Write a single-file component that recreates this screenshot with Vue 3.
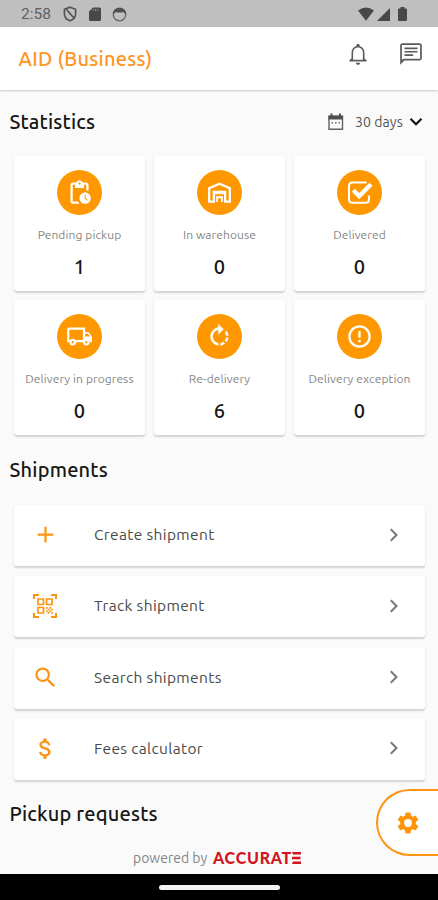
<script setup>
const stats = [
  { label: 'Pending pickup', value: 1, icon: 'pending' },
  { label: 'In warehouse', value: 0, icon: 'warehouse' },
  { label: 'Delivered', value: 0, icon: 'check' },
  { label: 'Delivery in progress', value: 0, icon: 'truck' },
  { label: 'Re-delivery', value: 6, icon: 'rotate' },
  { label: 'Delivery exception', value: 0, icon: 'alert' },
]
const actions = [
  { label: 'Create shipment', icon: 'plus' },
  { label: 'Track shipment', icon: 'qr' },
  { label: 'Search shipments', icon: 'search' },
  { label: 'Fees calculator', icon: 'dollar' },
]
</script>

<template>
  <div class="screen">
    <div class="status">
      <span class="time">2:58</span>
      <svg class="s-shield" width="14" height="16" viewBox="0 0 14 16" fill="none" stroke="#505050" stroke-width="1.6"><path d="M7 1.200 12.600 3.200V8c0 3-2.400 5.600-5.600 6.800C3.800 13.600 1.400 11 1.400 8V3.200zM3.500 3.500l7 8" /></svg>
      <svg class="s-sd" width="12" height="14" viewBox="0 0 12 14" fill="#484848"><path d="M4 .5h6.500Q12 .5 12 2v10.500Q12 14 10.500 14h-9Q0 14 0 12.500v-8z" /><path d="M4.300 2v2M6.500 2v2M8.700 2v2" stroke="#8a8a8a" /></svg>
      <svg class="s-face" width="15" height="15" viewBox="0 0 15 15"><circle cx="7.500" cy="7.500" r="6.300" fill="none" stroke="#606060" stroke-width="1.200" /><path d="M1.200 7C1.500 3 4 1 7.500 1s6 2 6.300 6c-1.300-.2-1.900-1-2.300-2-2.500.8-5.500.8-8 0-.4 1-1 1.800-2.300 2z" fill="#505050" /></svg>
      <span class="spacer"></span>
      <svg class="s-wifi" width="16" height="14" viewBox="0 0 16 14"><path d="M0 3.500Q8-2.500 16 3.500L8 13.700z" fill="#484848" /></svg>
      <svg class="s-signal" width="13" height="13" viewBox="0 0 13 13"><path d="M13 0v13H0z" fill="#484848" /></svg>
      <svg class="s-battery" width="9" height="14" viewBox="0 0 9 14"><path d="M2.500 1.500V0h4v1.500H8q1 0 1 1V13q0 1-1 1H1q-1 0-1-1V2.500q0-1 1-1z" fill="#484848" /></svg>
    </div>

    <header class="appbar">
      <h1 class="title">AID (Business)</h1>
      <svg class="bell" width="26" height="26" viewBox="0 0 24 24" fill="#5c5c5c"><path d="M12 22c1.100 0 2-.9 2-2h-4c0 1.100.9 2 2 2zm6-6v-5c0-3.070-1.630-5.640-4.500-6.320V4c0-.83-.67-1.500-1.500-1.500s-1.500.67-1.500 1.500v.68C7.640 5.360 6 7.920 6 11v5l-2 2v1h16v-1l-2-2zm-1.500 1.200h-9V11c0-2.700 1.640-5 4.500-5s4.500 2.300 4.500 5z" /></svg>
      <svg class="chat" width="26" height="26" viewBox="0 0 24 24" fill="#5c5c5c"><path d="M4 2h16c1.100 0 2 .9 2 2v12c0 1.100-.9 2-2 2H6l-4 4V4c0-1.100.9-2 2-2zm-.4 15.200 1.800-.8h15V3.600H3.600zM6 12.300h8v1.500H6zm0-3.100h12v1.500H6zM6 6.100h12v1.500H6z" /></svg>
    </header>

    <main class="content">
      <div class="section-head">
        <h2 class="heading">Statistics</h2>
        <div class="period">
          <svg width="18" height="18" viewBox="0 0 18 18"><path d="M2 3.500h13.500v12.800H2z" fill="none" stroke="#606060" stroke-width="1.400" /><path d="M1.500 2.500h14.500v4H1.500zM3.500.5h2v3h-2zM12 .5h2v3h-2z" fill="#505050" /><path d="M4.500 9H6v1.500H4.500zM8 9h1.500v1.500H8zM11.500 9H13v1.500h-1.500z" fill="#707070" /></svg>
          <span class="days">30 days</span>
          <svg class="caret" width="14" height="10" viewBox="0 0 14 10"><path d="m1.500 1.800 5.500 5.500 5.500-5.500" fill="none" stroke="#111" stroke-width="2.100" /></svg>
        </div>
      </div>

      <div class="stats">
        <div v-for="s in stats" :key="s.label" class="card stat">
          <div class="disc">
            <svg v-if="s.icon === 'pending'" width="27" height="27" viewBox="0 0 24 24" fill="#fff"><path d="M17 12c-2.760 0-5 2.240-5 5s2.240 5 5 5 5-2.240 5-5-2.240-5-5-5zm1.650 7.350L16.500 17.200V14h1v2.790l1.850 1.850-.7.710zM18 3h-3.180C14.400 1.840 13.300 1 12 1s-2.400.84-2.820 2H6c-1.100 0-2 .9-2 2v15c0 1.100.9 2 2 2h6.110c-.59-.57-1.070-1.250-1.420-2H6V5h2v3h8V5h2v5.080c.71.1 1.380.31 2 .6V5c0-1.100-.9-2-2-2zm-6 2c-.55 0-1-.45-1-1s.45-1 1-1 1 .45 1 1-.45 1-1 1z" /></svg>
            <svg v-else-if="s.icon === 'warehouse'" width="27" height="27" viewBox="0 0 24 24" fill="none" stroke="#fff"><path d="M2.800 20V8.300L12 4.200l9.200 4.100V20H17v-8.500H7V20z" stroke-width="2" /><path d="M7 13h10" stroke-width="1" /><path d="M9.800 20.500v-4.300h4.400v4.300" stroke-width="1.600" /></svg>
            <svg v-else-if="s.icon === 'check'" width="26" height="26" viewBox="0 0 26 26" fill="none" stroke="#fff"><path d="M19.500 2.500H5.500Q2 2.500 2 6v13.300q0 3.500 3.500 3.500h13q3.500 0 3.500-3.500V15.500" stroke-width="2" /><path d="m6.300 10.300 5.800 5.800L24 4.200" stroke-width="4.300" /></svg>
            <svg v-else-if="s.icon === 'truck'" width="27" height="27" viewBox="0 0 24 24" fill="#fff"><path d="M20 8h-3V4H3c-1.100 0-2 .9-2 2v11h2c0 1.660 1.340 3 3 3s3-1.340 3-3h6c0 1.660 1.340 3 3 3s3-1.340 3-3h2v-5l-3-4zm-.5 1.500 1.960 2.500H17V9.500h2.500zM6 18c-.55 0-1-.45-1-1s.45-1 1-1 1 .45 1 1-.45 1-1 1zm2.220-3c-.55-.61-1.330-1-2.220-1s-1.670.39-2.220 1H3V6h12v9H8.220zM18 18c-.55 0-1-.45-1-1s.45-1 1-1 1 .45 1 1-.45 1-1 1z" /></svg>
            <svg v-else-if="s.icon === 'rotate'" width="27" height="27" viewBox="0 0 24 24" fill="#fff" stroke="#fff" stroke-width="0.300"><path d="M15.550 5.550 11 1v3.070C7.060 4.560 4 7.920 4 12s3.050 7.440 7 7.930v-2.020c-2.840-.48-5-2.940-5-5.910s2.160-5.430 5-5.910V10l4.550-4.450zM19.930 11c-.17-1.390-.72-2.730-1.620-3.890l-1.420 1.420c.54.75.88 1.600 1.020 2.470h2.020zM13 17.900v2.020c1.390-.17 2.740-.71 3.900-1.610l-1.440-1.440c-.75.54-1.590.89-2.460 1.030zm3.890-2.420 1.420 1.410c.9-1.160 1.450-2.500 1.620-3.890h-2.020c-.14.870-.48 1.720-1.020 2.480z" /></svg>
            <svg v-else width="27" height="27" viewBox="0 0 24 24" fill="#fff"><path d="M11 15h2v2h-2zm0-8h2v6h-2zm1-5C6.470 2 2 6.500 2 12a10 10 0 1 0 10-10zm0 18a8 8 0 1 1 0-16 8 8 0 0 1 0 16z" /></svg>
          </div>
          <span class="stat-label">{{ s.label }}</span>
          <strong class="stat-value">{{ s.value }}</strong>
        </div>
      </div>

      <h2 class="heading h-ship">Shipments</h2>
      <div class="list">
        <div v-for="a in actions" :key="a.label" class="card row">
          <div class="row-icon">
            <svg v-if="a.icon === 'plus'" width="27" height="27" viewBox="0 0 24 24" fill="#ff9414"><path d="M19 13h-6v6h-2v-6H5v-2h6V5h2v6h6z" /></svg>
            <svg v-else-if="a.icon === 'qr'" width="24" height="24" viewBox="0 0 24 24" fill="none" stroke="#ff9414" stroke-width="1.700"><path d="M1 5V1h5M18 1h5v4M1 19v4h5M18 23h5v-4" stroke-width="2" /><path d="M5 5h5.500v5.500H5zM13.500 5H19v5.500h-5.500zM5 13.500h5.500V19H5z" /><path d="M13 13h1.700v1.700H13zM16.400 13h1.700v1.700h-1.700zM14.700 14.700h1.700v1.700h-1.700zM18.100 14.700h1.700v1.700h-1.700zM13 16.400h1.700v1.700H13zM16.400 16.400h1.700v1.700h-1.700zM14.700 18.100h1.700v1.700h-1.700zM18.100 18.100h1.700v1.700h-1.700z" fill="#ff9414" stroke="none" /></svg>
            <svg v-else-if="a.icon === 'search'" width="27" height="27" viewBox="0 0 24 24" fill="#ff9414"><path d="M15.500 14h-.79l-.28-.27A6.471 6.471 0 0 0 16 9.500 6.500 6.500 0 1 0 9.500 16c1.610 0 3.090-.59 4.230-1.570l.27.28v.79l5 4.990L20.490 19l-4.990-5zm-6 0C7.010 14 5 11.990 5 9.500S7.010 5 9.500 5 14 7.010 14 9.500 11.990 14 9.500 14z" /></svg>
            <svg v-else width="27" height="27" viewBox="0 0 24 24" fill="#ff9414"><path d="M11.800 10.900c-2.270-.59-3-1.200-3-2.150 0-1.090 1.010-1.850 2.700-1.850 1.780 0 2.440.85 2.500 2.100h2.210c-.07-1.720-1.120-3.300-3.210-3.810V3h-3v2.160c-1.940.42-3.500 1.680-3.500 3.610 0 2.310 1.910 3.460 4.700 4.130 2.500.6 3 1.480 3 2.410 0 .69-.49 1.790-2.700 1.790-2.060 0-2.870-.92-2.980-2.100h-2.200c.12 2.190 1.760 3.420 3.680 3.830V21h3v-2.150c1.950-.37 3.500-1.500 3.500-3.550 0-2.840-2.430-3.810-4.700-4.400z" /></svg>
          </div>
          <span class="row-label">{{ a.label }}</span>
          <svg class="chev" width="10" height="14" viewBox="0 0 10 14"><path d="m1.800 1.300 5.700 5.700-5.700 5.700" fill="none" stroke="#777" stroke-width="2" /></svg>
        </div>
      </div>

      <h2 class="heading h-pick">Pickup requests</h2>
    </main>

    <footer class="powered">
      <span class="by">powered by</span>
      <span class="brand">ACCURAT</span>
      <svg class="brand-e" width="9" height="12" viewBox="0 0 9 12" fill="#d4141c"><path d="M0 0h9v2.400H1zM0 4.800h8.500v2.400H0zM1 9.600h8V12H0z" /></svg>
    </footer>

    <div class="nav"><span class="pill"></span></div>

    <button class="fab">
      <svg width="26" height="26" viewBox="0 0 24 24" fill="#ff9408"><path d="M19.140 12.940c.04-.3.060-.61.060-.94 0-.32-.02-.64-.07-.94l2.030-1.580a.49.490 0 0 0 .12-.61l-1.920-3.320a.488.488 0 0 0-.59-.22l-2.390.96c-.5-.38-1.030-.7-1.620-.94l-.36-2.540a.484.484 0 0 0-.48-.41h-3.840c-.24 0-.43.17-.47.41l-.36 2.540c-.59.24-1.130.57-1.620.94l-2.390-.96c-.22-.08-.47 0-.59.22L2.740 8.870c-.12.21-.08.47.12.61l2.030 1.580c-.05.3-.09.63-.09.940s.02.64.07.94l-2.030 1.580a.49.490 0 0 0-.12.61l1.920 3.320c.12.22.37.29.59.22l2.390-.96c.5.38 1.030.7 1.620.94l.36 2.540c.05.24.24.41.48.41h3.840c.24 0 .44-.17.47-.41l.36-2.540c.59-.24 1.130-.56 1.620-.94l2.390.96c.22.08.47 0 .59-.22l1.920-3.320c.12-.22.07-.47-.12-.61zM12 15.600a3.600 3.600 0 1 1 0-7.200 3.600 3.600 0 0 1 0 7.200z" /></svg>
    </button>
  </div>
</template>

<style>
body { background: #fafafa; }
</style>

<style scoped>
* { box-sizing: border-box; }
.screen {
  position: relative;
  width: 438px;
  height: 900px;
  overflow: hidden;
  display: flex;
  flex-direction: column;
  background: #fafafa;
  font-family: Ubuntu, "Noto Sans", sans-serif;
  white-space: nowrap;
}
svg { display: block; flex: none; }
.status {
  height: 27px;
  flex: none;
  display: flex;
  align-items: center;
  padding: 1px 31px 0 21px;
  background: #bfbfbf;
}
.time { width: 42px; font: 15.500px/20px Roboto, sans-serif; color: #606060; }
.s-sd { margin-left: 12px; }
.s-face { margin-left: 11px; }
.spacer { flex: 1; }
.s-signal { margin-left: 3px; }
.s-battery { margin-left: 8px; }
.appbar {
  height: 63px;
  flex: none;
  display: flex;
  align-items: flex-start;
  padding: 0 14px 0 18.500px;
  background: #fff;
  box-shadow: 0 1px 2px rgba(0, 0, 0, 0.2);
}
.title { margin: 18px auto 0 0; font-size: 20px; line-height: 28px; font-weight: 500; letter-spacing: 0.250px; color: #ff941f; }
.bell { margin-top: 14px; }
.chat { margin: 14px 0 0 27px; }
.content { flex: 1; min-height: 0; padding: 0 13px 0 14px; }
.section-head { display: flex; align-items: center; height: 63px; margin-left: -4.500px; }
.heading { margin: 0; font-size: 20px; line-height: 28px; font-weight: 500; letter-spacing: 0.2px; color: #161616; }
.period { display: flex; align-items: center; margin-left: auto; padding-right: 2px; }
.days { width: 48px; margin-left: 10px; font-size: 14px; line-height: 20px; letter-spacing: 0.1px; color: #555; }
.caret { margin-left: 6px; }
.card { background: #fff; border-radius: 3px; box-shadow: 0 1.500px 2px rgba(0, 0, 0, 0.16); }
.stats { display: grid; grid-template-columns: repeat(3, 131px); gap: 9px; padding-top: 3px; }
.stat { height: 135px; display: flex; flex-direction: column; align-items: center; padding-top: 14px; }
.disc {
  width: 45px;
  height: 45px;
  border-radius: 50%;
  background: #ff9800;
  display: flex;
  align-items: center;
  justify-content: center;
}
.stat-label { margin-top: 12px; font-size: 12px; line-height: 16px; letter-spacing: 0.1px; color: #858585; }
.stat-value { margin-top: 10px; font-size: 20px; line-height: 28px; font-weight: 500; color: #161616; }
.h-ship { margin: 21px 0 21px -4.500px; }
.list { display: grid; gap: 10.300px; }
.row { height: 61px; display: flex; align-items: center; padding: 0 26px 2px 0; }
.row-icon { width: 80px; display: flex; justify-content: center; padding-right: 18px; }
.row-label { margin-right: auto; padding-top: 1px; font-size: 15.500px; line-height: 22px; letter-spacing: 0.350px; color: #4a4a4a; }
.h-pick { margin: 20px 0 0 -4.500px; }
.powered {
  height: 32px;
  flex: none;
  display: flex;
  align-items: center;
  padding: 0 0 1px 133px;
}
.by { width: 74px; font-size: 14px; line-height: 20px; color: #858585; }
.brand { width: 78px; margin-left: 6px; font: 900 16px/20px Lato, sans-serif; letter-spacing: 0.750px; color: #d4141c; }
.brand-e { margin-left: 1px; }
.nav { height: 26px; flex: none; background: #000; display: flex; justify-content: center; align-items: center; }
.pill { width: 121px; height: 5px; border-radius: 3px; background: #f2f2f2; }
.fab {
  position: absolute;
  top: 789px;
  right: -8px;
  width: 70px;
  height: 67px;
  padding: 0 0 0 17px;
  border: 2px solid #ff9414;
  border-right: 0;
  border-radius: 34px 0 0 34px;
  background: #fff;
  display: flex;
  align-items: center;
}
</style>
